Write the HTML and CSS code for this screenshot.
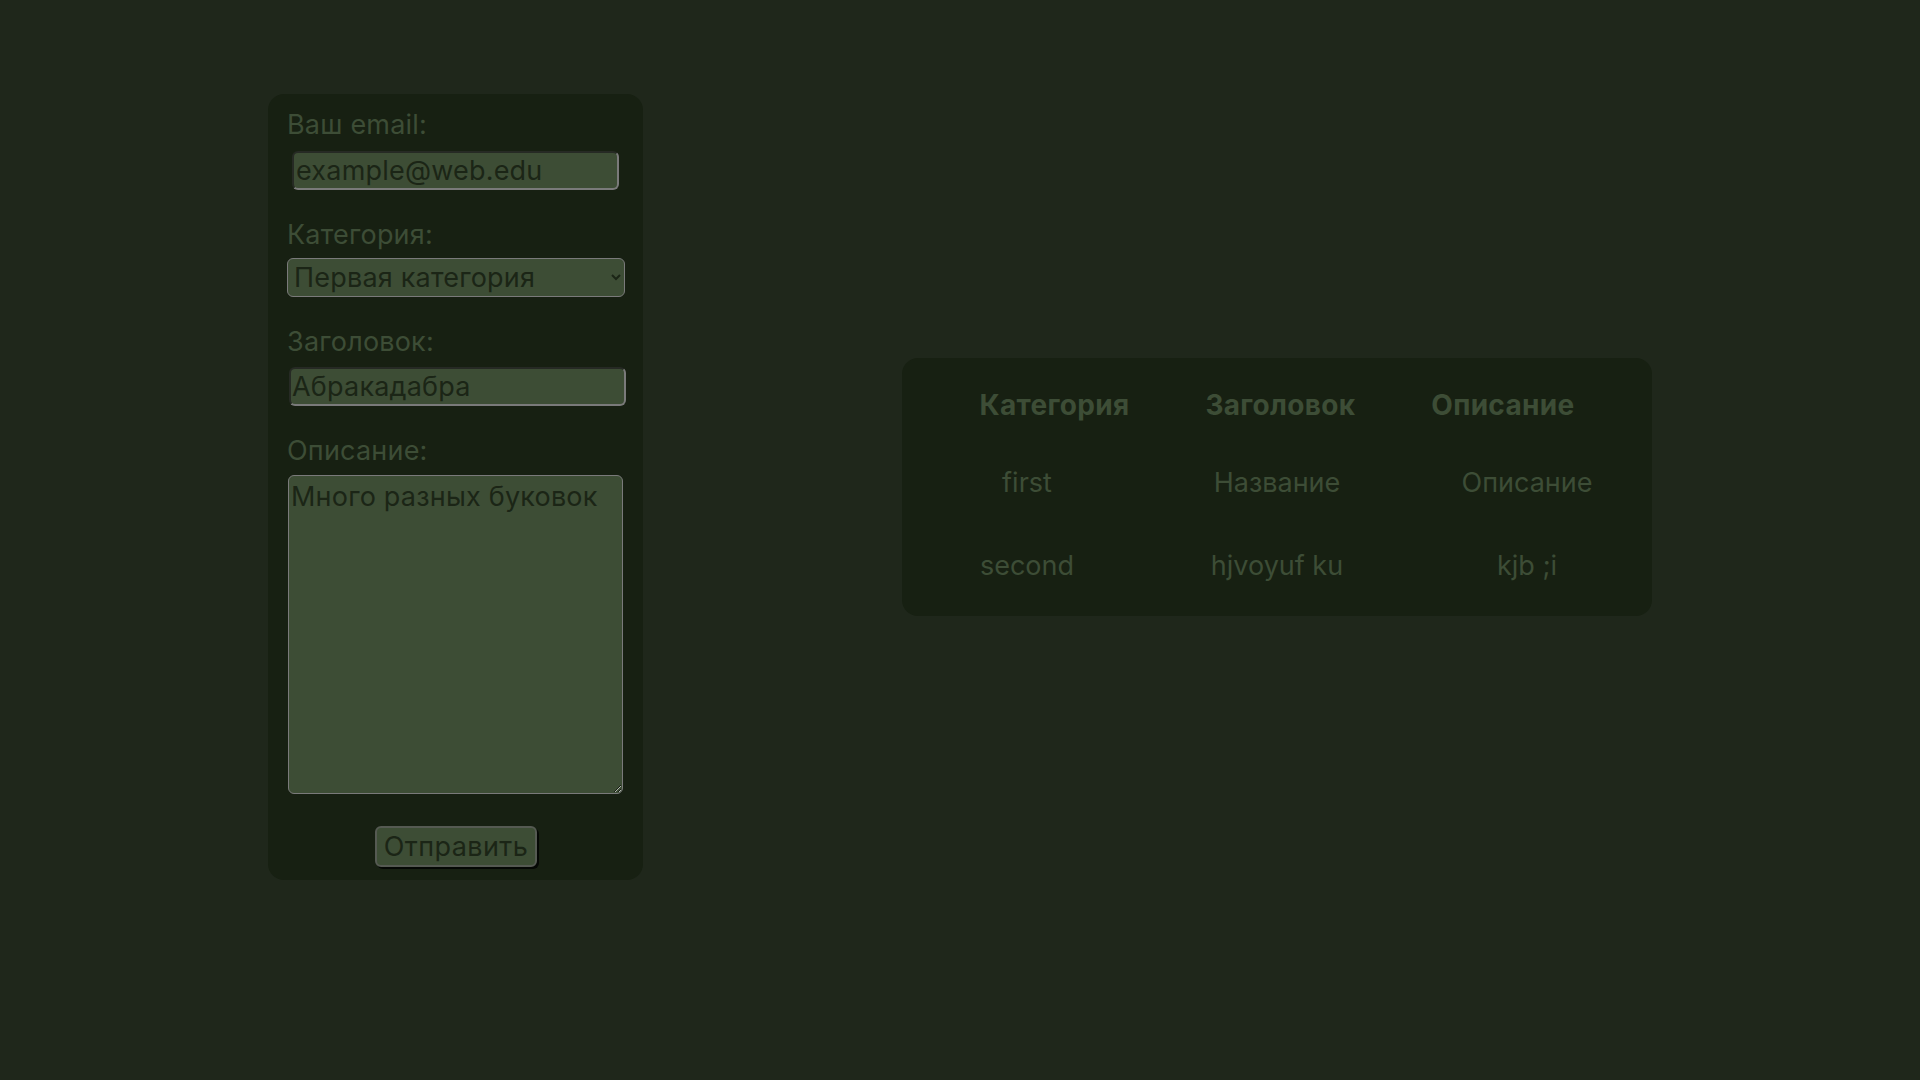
FILE: index.html
```html
<!DOCTYPE html>
<html lang="ru">
<head>
<meta charset="utf-8">
<title>Форма</title>
<link rel="stylesheet" href="styles.css">
</head>
<body>
<main class="page">
  <form class="form-card">
    <label class="label" for="email">Ваш email:</label>
    <input class="field field-email" id="email" type="text" value="example@web.edu">
    <label class="label label-gap" for="cat">Категория:</label>
    <select class="field field-select" id="cat">
      <option>Первая категория</option>
      <option>Вторая категория</option>
    </select>
    <label class="label label-gap" for="title">Заголовок:</label>
    <input class="field field-title" id="title" type="text" value="Абракадабра">
    <label class="label label-gap" for="desc">Описание:</label>
    <textarea class="field field-area" id="desc">Много разных буковок</textarea>
    <button class="submit" type="button">Отправить</button>
  </form>

  <section class="table-card">
    <div class="table-head">
      <div class="th">Категория</div>
      <div class="th">Заголовок</div>
      <div class="th">Описание</div>
    </div>
    <div class="table-row row-first">
      <div class="td">first</div>
      <div class="td">Название</div>
      <div class="td">Описание</div>
    </div>
    <div class="table-row row-second">
      <div class="td">second</div>
      <div class="td">hjvoyuf ku</div>
      <div class="td">kjb ;i</div>
    </div>
  </section>
</main>
</body>
</html>
```

FILE: styles.css
```css
html, body {
  margin: 0;
  padding: 0;
  background: #1f271b;
  height: 100%;
}

body {
  font-family: "Inter", "Roboto", "Liberation Sans", sans-serif;
  font-size: 27px;
  color: #3d4d36;
}

.page {
  display: flex;
  align-items: center;
  padding: 94px 0 0 268px;
  gap: 259px;
  box-sizing: border-box;
}

.form-card {
  width: 375px;
  box-sizing: border-box;
  background: #172012;
  border-radius: 16px;
  padding: 14px 18px 13px 19px;
  display: flex;
  flex-direction: column;
  align-items: flex-start;
}

.label {
  display: block;
  line-height: 33px;
  color: #3d4d36;
  letter-spacing: 0.2px;
}

.label-gap {
  margin-top: 28px;
}

.field {
  font-family: inherit;
  font-size: 27px;
  line-height: 33px;
  color: #1b2516;
  background: #3d4d35;
  box-sizing: border-box;
  margin: 0;
  outline: none;
  letter-spacing: 0.2px;
}

.field-email {
  width: 327px;
  height: 39px;
  margin: 10px 0 0 5px;
  padding: 0 2px;
  border: 2px solid;
  border-color: #262a24 #7a7a7a #7a7a7a #262a24;
  border-radius: 6px;
}

.field-select {
  width: 338px;
  height: 39px;
  margin-top: 7px;
  padding: 0 2px;
  border: 1px solid #7a7a7a;
  border-radius: 6px;
}

.field-title {
  width: 337px;
  height: 39px;
  margin: 9px 0 0 2px;
  padding: 0 1px;
  border: 2px solid;
  border-color: #262a24 #7a7a7a #7a7a7a #262a24;
  border-radius: 6px;
}

.field-area {
  width: 335px;
  height: 319px;
  margin: 8px 0 0 1px;
  padding: 4px 2px 2px;
  border: 1px solid #7a7a7a;
  border-radius: 6px;
  resize: both;
}

.submit {
  align-self: center;
  margin-top: 32px;
  width: 162px;
  height: 41px;
  box-sizing: border-box;
  padding: 0;
  font-family: inherit;
  font-size: 27px;
  line-height: 33px;
  letter-spacing: 0.4px;
  color: #1b2516;
  background: #3d4d35;
  border: 2px solid #555a52;
  border-radius: 6px;
  box-shadow: 2px 2px 0 #050805;
  cursor: pointer;
}

.table-card {
  width: 750px;
  box-sizing: border-box;
  background: #172012;
  border-radius: 16px;
  padding: 31px 0 34px;
}

.table-head {
  display: flex;
  justify-content: center;
  gap: 76px;
}

.th {
  font-weight: 700;
  font-size: 28px;
  letter-spacing: 0.3px;
  line-height: 33px;
  color: #3d4d36;
}

.table-row {
  display: grid;
  grid-template-columns: repeat(3, 250px);
  line-height: 33px;
  color: #3d4d36;
}

.row-first {
  margin-top: 44px;
}

.row-second {
  margin-top: 50px;
}

.td {
  text-align: center;
}
```
